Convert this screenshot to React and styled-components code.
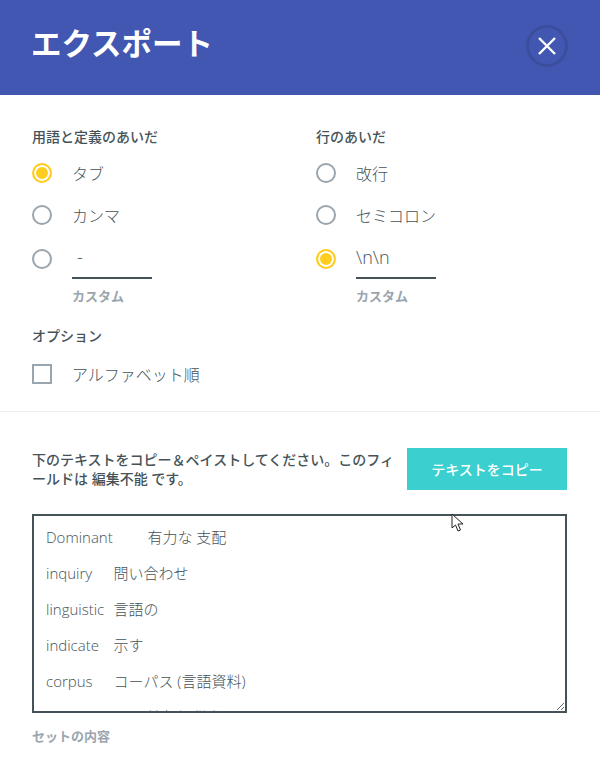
import styled, { createGlobalStyle } from "styled-components";

const GlobalStyle = createGlobalStyle`
  html, body {
    margin: 0;
    padding: 0;
    background: #fff;
  }
  body {
    font-family: "Open Sans", "Noto Sans CJK JP", sans-serif;
    color: #455358;
  }
`;

const Modal = styled.div`
  position: relative;
  width: 600px;
  height: 764px;
  overflow: hidden;
  background: #fff;
`;
const Header = styled.header`
  height: 95px;
  padding: 0 32px 4px 31px;
  box-sizing: border-box;
  display: flex;
  align-items: center;
  justify-content: space-between;
  background: #4257b2;
`;
const Title = styled.h1`
  margin: 0 0 8px;
  font-size: 30.5px;
  font-weight: 700;
  color: #fff;
`;
const CloseButton = styled.button`
  width: 42px;
  height: 42px;
  padding: 0;
  border: 3px solid #3b4d9c;
  border-radius: 50%;
  background: transparent;
  display: flex;
  align-items: center;
  justify-content: center;
`;
const Options = styled.section`
  padding: 32px 32px 0;
  height: 317px;
  box-sizing: border-box;
  border-bottom: 1px solid #edeff0;
`;
const Columns = styled.div`
  display: grid;
  grid-template-columns: 284px 1fr;
`;
const Heading = styled.div`
  font-size: 14px;
  line-height: 20px;
  font-weight: 500;
`;
const Row = styled.label`
  height: 42px;
  display: flex;
  align-items: center;
  gap: 20px;
  font-size: 16px;
  font-weight: 300;
`;
const RowList = styled.div`
  margin-top: 5px;
`;
const Radio = styled.span`
  width: 20px;
  height: 20px;
  box-sizing: border-box;
  flex: none;
  border-radius: 50%;
  border: 2px solid ${(p) => (p.$on ? "#ffcd1f" : "#9aa5ad")};
  background: ${(p) => (p.$on ? "#ffcd1f" : "transparent")};
  box-shadow: ${(p) => (p.$on ? "inset 0 0 0 2px #fff" : "none")};
`;
const Check = styled.span`
  width: 20px;
  height: 20px;
  box-sizing: border-box;
  flex: none;
  border: 2px solid #9aa5ad;
`;
const CustomValue = styled.div`
  width: 80px;
  height: 36px;
  margin-top: 4px;
  box-sizing: border-box;
  padding-left: ${(p) => p.$indent}px;
  border-bottom: 2px solid #455358;
  font-size: 18px;
  line-height: 28px;
  font-weight: 300;
`;
const CustomRow = styled(Row)`
  align-items: flex-start;
  height: 40px;
  margin-top: 3px;
  ${Radio} {
    margin-top: 10px;
  }
`;
const Hint = styled.div`
  margin: 9px 0 0 40px;
  font-size: 13px;
  line-height: 16px;
  font-weight: 700;
  color: #9aa5ad;
`;
const OptionHeading = styled(Heading)`
  margin-top: 22px;
  margin-bottom: 7px;
`;
const Output = styled.section`
  padding: 36px 33px 0 32px;
`;
const CopyBar = styled.div`
  display: flex;
  align-items: center;
  justify-content: space-between;
`;
const CopyNote = styled.p`
  margin: 0;
  width: 366px;
  font-size: 14px;
  line-height: 19px;
  font-weight: 500;
`;
const CopyButton = styled.button`
  width: 160px;
  height: 42px;
  flex: none;
  border: 0;
  background: #3ccfcf;
  color: #fff;
  font-family: inherit;
  font-size: 14px;
  font-weight: 500;
`;
const Field = styled.textarea`
  display: block;
  width: 535px;
  height: 199px;
  margin-top: 24px;
  padding: 3px 12px 0;
  box-sizing: border-box;
  border: 2px solid #455358;
  border-radius: 0;
  outline: none;
  background: #fff;
  color: #455358;
  font-family: inherit;
  font-size: 15px;
  font-weight: 300;
  line-height: 36px;
  tab-size: 33.8px;
  white-space: pre-wrap;
  overflow: hidden;
  resize: both;
`;
const Caption = styled.div`
  margin-top: 15px;
  font-size: 13px;
  line-height: 16px;
  font-weight: 700;
  color: #9aa5ad;
`;
const Pointer = styled.svg`
  position: absolute;
  left: 451px;
  top: 513px;
`;

const terms =
  "Dominant\t有力な 支配\ninquiry\t問い合わせ\nlinguistic\t言語の\nindicate\t示す\ncorpus\tコーパス (言語資料)\ninformant\t情報提供者";

export default function App() {
  return (
    <Modal>
      <GlobalStyle />
      <Header>
        <Title>エクスポート</Title>
        <CloseButton aria-label="閉じる">
          <svg width="20" height="20" viewBox="0 0 20 20">
            <path d="M2 2 L18 18 M18 2 L2 18" stroke="#fff" strokeWidth="2.4" fill="none" />
          </svg>
        </CloseButton>
      </Header>
      <Options>
        <Columns>
          <div>
            <Heading>用語と定義のあいだ</Heading>
            <RowList>
              <Row><Radio $on />タブ</Row>
              <Row><Radio />カンマ</Row>
              <CustomRow><Radio /><CustomValue $indent={5}>-</CustomValue></CustomRow>
            </RowList>
            <Hint>カスタム</Hint>
          </div>
          <div>
            <Heading>行のあいだ</Heading>
            <RowList>
              <Row><Radio />改行</Row>
              <Row><Radio />セミコロン</Row>
              <CustomRow><Radio $on /><CustomValue $indent={0}>\n\n</CustomValue></CustomRow>
            </RowList>
            <Hint>カスタム</Hint>
          </div>
        </Columns>
        <OptionHeading>オプション</OptionHeading>
        <Row><Check />アルファベット順</Row>
      </Options>
      <Output>
        <CopyBar>
          <CopyNote>下のテキストをコピー＆ペイストしてください。このフィールドは 編集不能 です。</CopyNote>
          <CopyButton>テキストをコピー</CopyButton>
        </CopyBar>
        <Field readOnly value={terms} />
        <Caption>セットの内容</Caption>
      </Output>
      <Pointer width="14" height="20" viewBox="0 0 14 20">
        <path d="M1 1 L1 15 L4.5 12 L7 18 L9.5 17 L7 11 L12 11 Z" fill="#fff" stroke="#222" strokeWidth="1" />
      </Pointer>
    </Modal>
  );
}
